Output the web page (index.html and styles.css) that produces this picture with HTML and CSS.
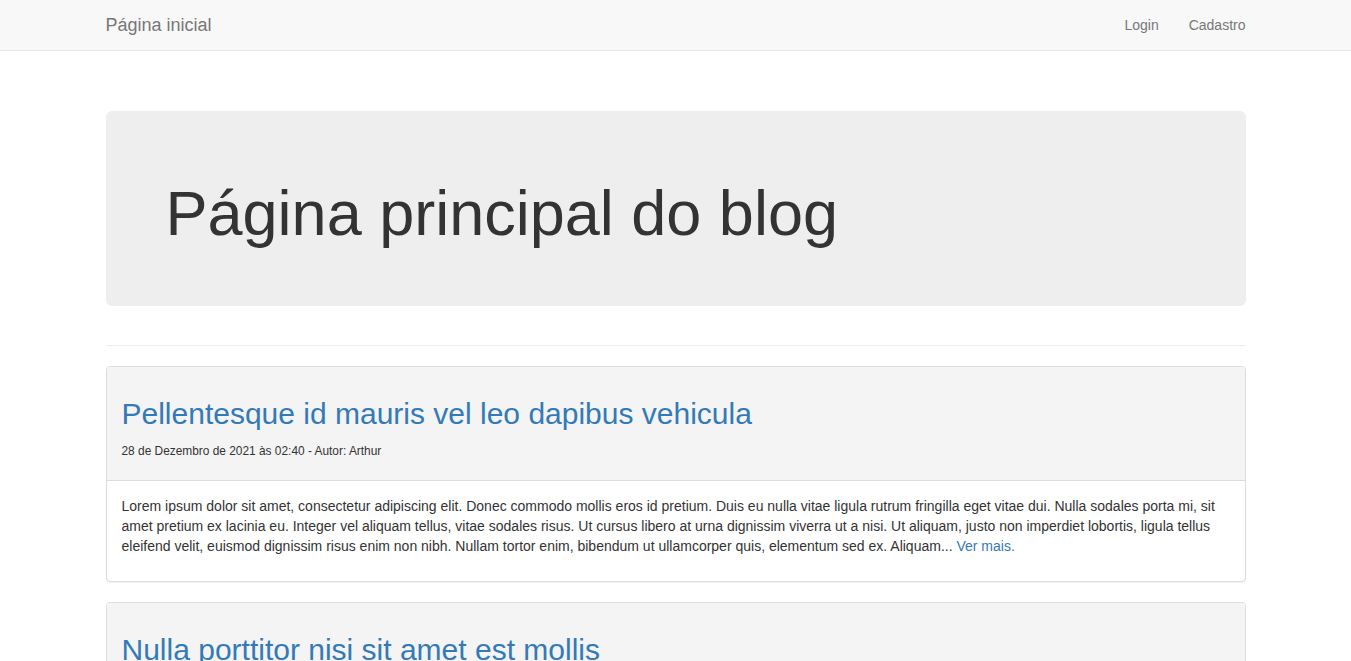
FILE: index.html
```html
<!DOCTYPE html>
<html lang="pt-BR">
<head>
<meta charset="utf-8">
<title>Página inicial</title>
<link rel="stylesheet" href="styles.css">
</head>
<body>
<nav class="navbar">
  <div class="container navbar-inner">
    <a class="brand" href="#">Página inicial</a>
    <ul class="nav">
      <li><a href="#">Login</a></li>
      <li><a href="#">Cadastro</a></li>
    </ul>
  </div>
</nav>
<main class="container main">
  <div class="jumbotron">
    <h1>Página principal do blog</h1>
  </div>
  <hr class="divider">
  <article class="panel">
    <div class="panel-heading">
      <h2 class="post-title"><a href="#">Pellentesque id mauris vel leo dapibus vehicula</a></h2>
      <p class="post-meta">28 de Dezembro de 2021 às 02:40 - Autor: Arthur</p>
    </div>
    <div class="panel-body">
      <p>Lorem ipsum dolor sit amet, consectetur adipiscing elit. Donec commodo mollis eros id pretium. Duis eu nulla vitae ligula rutrum fringilla eget vitae dui. Nulla sodales porta mi, sit amet pretium ex lacinia eu. Integer vel aliquam tellus, vitae sodales risus. Ut cursus libero at urna dignissim viverra ut a nisi. Ut aliquam, justo non imperdiet lobortis, ligula tellus eleifend velit, euismod dignissim risus enim non nibh. Nullam tortor enim, bibendum ut ullamcorper quis, elementum sed ex. Aliquam... <a href="#">Ver mais.</a></p>
    </div>
  </article>
  <article class="panel">
    <div class="panel-heading">
      <h2 class="post-title"><a href="#">Nulla porttitor nisi sit amet est mollis</a></h2>
      <p class="post-meta">28 de Dezembro de 2021 às 02:38 - Autor: Arthur</p>
    </div>
    <div class="panel-body">
      <p>Lorem ipsum dolor sit amet, consectetur adipiscing elit. <a href="#">Ver mais.</a></p>
    </div>
  </article>
</main>
</body>
</html>
```
FILE: styles.css
```css
* { box-sizing: border-box; }
html, body { margin: 0; padding: 0; }
body {
  font-family: "Liberation Sans", Arial, Helvetica, sans-serif;
  font-size: 14px;
  line-height: 20px;
  color: #333;
  background: #fff;
}
a { color: #337ab7; text-decoration: none; }
.container {
  max-width: 1170px;
  margin: 0 auto;
  padding: 0 15px;
}
.navbar {
  height: 51px;
  background: #f8f8f8;
  border-bottom: 1px solid #e7e7e7;
}
.navbar-inner {
  display: flex;
  justify-content: space-between;
  align-items: flex-start;
}
.brand {
  display: block;
  margin-left: -15px;
  padding: 15px;
  font-size: 18px;
  line-height: 20px;
  color: #777;
}
.nav {
  display: flex;
  list-style: none;
  margin: 0 -15px 0 0;
  padding: 0;
}
.nav a {
  display: block;
  padding: 15px;
  line-height: 20px;
  font-size: 14px;
  color: #777;
}
.main { padding-top: 60px; }
.jumbotron {
  background: #eee;
  border-radius: 6px;
  padding: 48px 60px;
}
.jumbotron h1 {
  margin: 20px 0 10px;
  font-size: 63px;
  line-height: 69px;
  font-weight: 500;
  color: #333;
}
.divider {
  margin: 39px 0 20px;
  border: 0;
  border-top: 1px solid #eee;
  height: 0;
}
.panel {
  border: 1px solid #ddd;
  border-radius: 4px;
  box-shadow: 0 1px 1px rgba(0,0,0,.05);
  margin-bottom: 20px;
  background: #fff;
  overflow: hidden;
}
.panel-heading {
  background: #f4f4f4;
  border-bottom: 1px solid #ddd;
  padding: 10px 15px;
}
.post-title {
  margin: 20px 0 10px;
  font-size: 30px;
  line-height: 33px;
  font-weight: 500;
}
.post-meta {
  margin: 0;
  padding: 3px 0 10px;
  font-size: 11.9px;
  line-height: 17px;
  color: #333;
}
.panel-body { padding: 15px; }
.panel-body p { margin: 0 0 10px; }
```
